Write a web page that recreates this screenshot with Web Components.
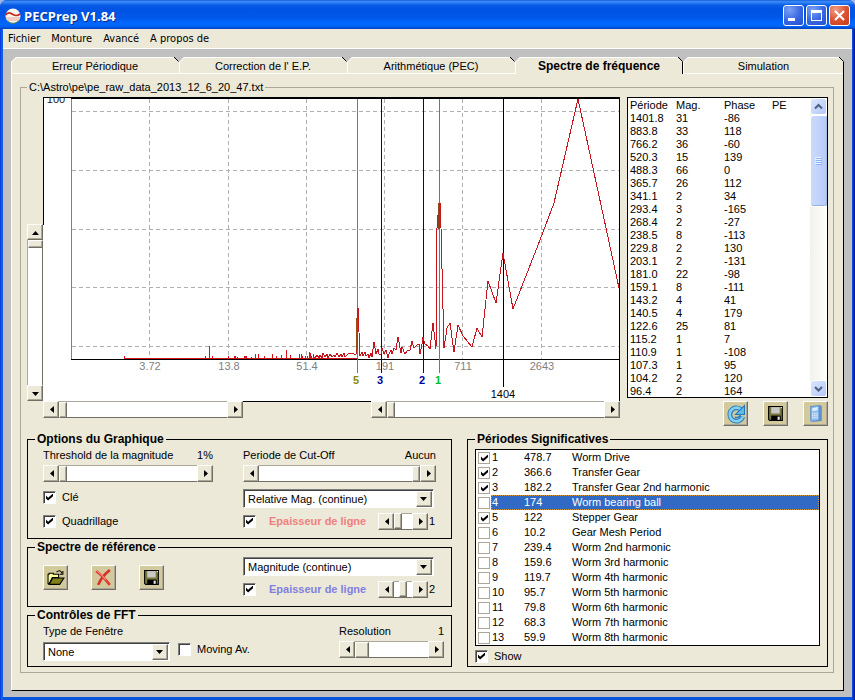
<!DOCTYPE html>
<html lang="fr">
<head>
<meta charset="utf-8">
<title>PECPrep V1.84</title>
<style>
  body { margin: 0; background: #9db4e4; font: 11px/13px "Liberation Sans", Arial, sans-serif; color: #000; }
</style>
</head>
<body>
<pec-window>
  <title-bar slot="title" caption="PECPrep V1.84"></title-bar>
  <menu-bar slot="menu" items="Fichier|Monture|Avancé|A propos de"></menu-bar>
  <tab-panel tabs="Erreur Périodique|Correction de l' E.P.|Arithmétique (PEC)|Spectre de fréquence|Simulation" selected="3">
    <spectrum-page></spectrum-page>
  </tab-panel>
</pec-window>

<script>
const face = '#ece9d8';
const raised = `background:${face};border:1px solid;border-color:#fff #716f64 #716f64 #fff;box-shadow:inset -1px -1px 0 #aca899;`;

function define(name, build, ready) {
  customElements.define(name, class extends HTMLElement {
    connectedCallback() {
      if (this.shadowRoot) return;
      const root = this.attachShadow({ mode: 'open' });
      root.innerHTML = '<style>*{box-sizing:border-box}button,input,select{font:inherit;margin:0}</style>' + build(this);
      if (ready) ready(root, this);
    }
  });
}
const attr = (el, name, fallback = '') => el.getAttribute(name) ?? fallback;

define('pec-window', () => `
<style>
  :host { display:flex; flex-direction:column; min-height:100vh; box-sizing:border-box; padding:0 3px 3px;
    border-radius:7px 7px 0 0; overflow:hidden; background:linear-gradient(90deg,#0831d9,#1666ee 2px,#0855dd 3px,#0855dd calc(100% - 3px),#0a3ad8 calc(100% - 2px),#00138c); 
    border-bottom:1px solid #001ea0; }
  slot[name=title] { display:block; margin:0 -3px; }
  main { flex:1; display:flex; flex-direction:column; padding:8px 8px 6px; background:#c0c0c0; }
</style>
<slot name="title"></slot><slot name="menu"></slot><main><slot></slot></main>`);

define('title-bar', el => `
<style>
  :host { display:flex; align-items:center; gap:2px; height:29px; box-sizing:border-box; padding:3px 5px 1px 5px;
    background:linear-gradient(#0a4ac0 0,#3c8cf8 1px,#2a7cf4 3px,#0a5ce6 5px,#0054e3 9px,#0056e8 17px,#0064fc 22px,#0068ff 25px,#005cec 27px,#0040b8 29px); }
  h1 { flex:1; margin:0 0 0 1px; font:bold 13px/18px "Open Sans","Noto Sans",sans-serif; color:#fff; text-shadow:1px 1px 0 #0a2c8c; }
  button { width:21px; height:21px; padding:0; border:1px solid #fff; border-radius:3px; background:radial-gradient(circle at 30% 20%,#7aa2f4,#3866e2 55%,#2450cc); }
  button.close { background:radial-gradient(circle at 30% 20%,#f0a088,#dc5434 50%,#c03c18); }
  svg { display:block; }
</style>
<svg width="16" height="16" viewBox="0 0 16 16"><circle cx="8" cy="8" r="7.5" fill="#f8f6ec"/><path d="M.7 7c2-3.500 5-2 7.300-.5s4.500 1.500 7.200-.5" fill="none" stroke="#c8281e" stroke-width="1.600"/><path d="M1 10h14M2 12h12" stroke="#e4a898"/><path d="M2.500 13a7.500 7.500 0 0 0 11 0" fill="none" stroke="#387848"/></svg>
<h1>${attr(el, 'caption')}</h1>
<button aria-label="Réduire"><svg width="19" height="19"><path d="M4 12h7v3H4z" fill="#fff"/></svg></button>
<button aria-label="Agrandir"><svg width="19" height="19"><path d="M4 4h11v11H4zM5 7v7h9V7z" fill="#fff" fill-rule="evenodd"/></svg></button>
<button class="close" aria-label="Fermer"><svg width="19" height="19"><path d="M5 5l9 9M14 5l-9 9" stroke="#fff" stroke-width="2"/></svg></button>`);

define('menu-bar', el => `
<style>
  :host { display:block; background:${face}; border-bottom:1px solid #fff; }
  nav { display:flex; gap:11px; height:19px; padding-left:5px; align-items:center; }
  button { border:0; padding:0; background:none; color:#000; font:11px/13px "DejaVu Sans Condensed","Noto Sans",sans-serif; }
</style>
<nav>${attr(el, 'items').split('|').map(t => `<button>${t}</button>`).join('')}</nav>`);

define('tab-panel', el => {
  const on = +attr(el, 'selected', 0);
  const tabs = attr(el, 'tabs').split('|').map((t, i, a) => `
    <button role="tab" aria-selected="${i === on}">
      <svg width="5" height="17"><path d="M0 0h5L0 5z" fill="#c0c0c0"/><path d="M.500 17V5L5 .500" fill="none" stroke="#fff"/></svg>
      <span>${t}</span>
      <svg width="5" height="17"><path d="M0 0h5v5z" fill="#c0c0c0"/><path d="M0 0L4.500 4.500${i === on || i === a.length - 1 ? 'V17' : ''}" fill="none" stroke="#000"/></svg>
    </button>`).join('');
  return `
<style>
  :host { flex:1; display:flex; flex-direction:column; }
  [role=tablist] { display:grid; grid-template-columns:168fr 168fr 168fr 168fr 161fr; }
  button { display:flex; align-items:center; height:17px; padding:0; border:0; color:#000; background:linear-gradient(#fff 1px,${face} 1px); box-shadow:inset 0 -1px #fff; }
  button[aria-selected=true] { font-weight:bold; font-size:12px; box-shadow:none; }
  span { flex:1; white-space:nowrap; line-height:17px; padding-top:1px; }
  section { flex:1; background:${face}; border:solid; border-width:0 1px 1px; border-color:#fff #000 #000 #fff; padding:7px 9px 17px 8px; }
</style>
<div role="tablist">${tabs}</div><section role="tabpanel"><slot></slot></section>`;
});

define('group-frame', el => `
<style>
  :host { display:block; }
  fieldset { height:100%; min-width:0; margin:0; padding:var(--pad,3px 15px 0); border:1px solid #000; }
  legend { padding:0 2px; line-height:13px; font-size:12px; font-weight:bold; margin-left:calc(7px - var(--inset,15px)); }
  :host([etched]) > fieldset { border-color:#aca899; }
  :host([etched]) > fieldset > legend { font-size:11px; font-weight:normal; margin:0; }
</style>
<fieldset><legend>${attr(el, 'caption')}</legend><slot></slot></fieldset>`);

define('classic-scroll', el => {
  const vert = el.hasAttribute('vertical');
  const cap = attr(el, 'caption');
  const thumb = attr(el, 'thumb', '8') + 'px';
  const arrow = a => ({ l: 'M9 3v7L5 6.500z', r: 'M5 3v7l4-3.500z', u: 'M3 9h7L6.500 5z', d: 'M3 5h7L6.500 9z' })[a];
  const btn = (a, n) => `<button aria-label="${n}"><svg width="13" height="13"><path d="${arrow(a)}"/></svg></button>`;
  return `
<style>
  :host { display:block; }
  .cap { display:flex; justify-content:space-between; margin-bottom:3px; }
  .bar { display:flex; height:17px; background:#fff; }
  button { flex:none; width:16px; height:17px; padding:0; display:grid; place-items:center; ${raised} }
  svg { display:block; }
  input { flex:1; min-width:0; height:17px; appearance:none; background:#fff; border-top:1px solid #aca899; border-bottom:1px solid #716f64; }
  input::-webkit-slider-thumb { appearance:none; width:${thumb}; height:16px; border-radius:0; ${raised} }
  :host([vertical]) .bar { flex-direction:column; height:100%; width:16px; }
  :host([vertical]) button { height:16px; }
  :host([vertical]) input { writing-mode:vertical-lr; width:16px; height:auto; min-height:0; border:0; border-left:1px solid #aca899; border-right:1px solid #716f64; }
  :host([vertical]) input::-webkit-slider-thumb { width:15px; height:${thumb}; }
</style>
${cap ? `<div class="cap"><label for="r">${cap}</label><output for="r">${attr(el, 'readout')}</output></div>` : ''}
<div class="bar">${btn(vert ? 'u' : 'l', 'Moins')}<input id="r" type="range" min="0" max="100" value="${attr(el, 'value', 0)}" ${cap ? '' : `aria-label="${attr(el, 'name')}"`}>${btn(vert ? 'd' : 'r', 'Plus')}</div>`;
});

define('classic-select', el => `
<style>
  :host { display:block; }
  label { display:block; margin-bottom:4px; }
  div { display:grid; grid-template-columns:1fr 16px; height:19px; padding:1px; background:#fff; border:1px solid; border-color:#808080 #fff #fff #808080; box-shadow:inset 1px 1px #404040; }
  select { grid-area:1/1/2/3; width:100%; height:15px; appearance:none; border:0; border-radius:0; padding:0 18px 0 3px; background:none; color:#000; line-height:15px; margin-top:1px; }
  svg { grid-area:1/2; pointer-events:none; width:16px; height:16px; ${raised} }
</style>
${attr(el, 'caption') ? `<label for="s">${attr(el, 'caption')}</label>` : ''}
<div><select id="s" aria-label="${attr(el, 'caption') || attr(el, 'name')}">${attr(el, 'options').split('|').map(o => `<option>${o}</option>`).join('')}</select><svg viewBox="0 0 14 14"><path d="M3 5h7L6.500 9z"/></svg></div>`);

const tick = `
  input { flex:none; appearance:none; display:grid; width:13px; height:13px; background:#fff; border:1px solid; border-color:#808080 #fff #fff #808080; box-shadow:inset 1px 1px #404040; }
  input:checked::before { content:""; width:7px; height:7px; margin:2px; background:#000; clip-path:polygon(0 30%,30% 60%,100% 0,100% 40%,30% 100%,0 70%); }`;

define('classic-check', el => `
<style>
  :host { display:block; }
  label { display:flex; align-items:center; gap:var(--gap,6px); height:14px; white-space:nowrap; color:var(--ink,#000); font-weight:var(--weight,normal); }
  ${tick}
</style>
<label><input type="checkbox" ${el.hasAttribute('checked') ? 'checked' : ''}><span>${attr(el, 'text')}</span></label>`);

const icons = {
  open: '<path d="M1 5h1V4h4v1h5v3H5l-3 6H1z" fill="#ffff9c" stroke="#000"/><path d="M2 14.500L5.500 8.500H16L12 14.500z" fill="#808018" stroke="#000"/><path d="M9 3c2-2 4-2 5 1m1-2v3h-3" fill="none" stroke="#000"/>',
  remove: '<path d="M1 2c5 3 9 8 13 13" fill="none" stroke="#e43c34" stroke-width="2.500"/><path d="M14 1C9 5 5 10 3 15" fill="none" stroke="#d83028" stroke-width="2.500"/><path d="M1 1c4 3 7 6 9 9" fill="none" stroke="#f49088"/>',
  save: '<path d="M1.500 1.500h13v13h-12l-1-1z" fill="#77773c" stroke="#000"/><path d="M4 2h8v6H4z" fill="#c8c8c8"/><path d="M4 10h9v5H4z" fill="#000"/><path d="M10 11h2v3h-2z" fill="#e8e8e8"/><path d="M13 2h1v1h-1z" fill="#fff"/>',
  refresh: '<path d="M13.500 4.500A6.300 6.300 0 1 0 15 11" fill="none" stroke="#2a80c0" stroke-width="4.500"/><path d="M13 4A6.400 6.400 0 1 0 15 11" fill="none" stroke="#84d0f2" stroke-width="2.500"/><path d="M16.500.5v8.500H8l3-3z" fill="#60bcea" stroke="#2478b8"/><path d="M7.500 11.500c3 1 5-.5 5-2.500" stroke="#2a80c0" stroke-width="1.500" fill="none"/>',
  calc: '<path d="M3 1l9-1 2 1v14l-9 1-2-1z" fill="#6090cc"/><path d="M4 2l7-1v13l-7 1z" fill="#8cbcec"/><path d="M5 3l5-1v3l-5 1z" fill="#e0f0ff"/><path d="M5 8h1m1 0h1m1 0h1M5 10h1m1 0h1m1 0h1M5 12h1m1 0h1m1 0h1" stroke="#f4faff" stroke-width="1.500"/>'
};
define('tool-button', el => `
<style>
  :host { display:block; }
  button { display:grid; place-items:center; width:25px; height:25px; padding:0; ${raised} background:#d2ca9c; }
  svg { display:block; overflow:visible; }
</style>
<button aria-label="${attr(el, 'name')}"><svg width="18" height="18" viewBox="0 0 17 17">${icons[attr(el, 'icon')]}</svg></button>`);

define('spectrum-chart', () => {
  const xs = [[149, '3.72'], [228, '13.8'], [306, '51.4'], [384, '191'], [462, '711'], [541, '2643']];
  const ys = [111, 170, 229, 287, 346];
  const spikes = [[124, 3], [205, 3], [209, 13], [212, 3], [228, 3], [234, 3], [235, 3], [237, 2], [244, 3], [245, 3], [246, 3], [251, 2], [255, 5], [258, 5], [264, 3], [272, 5], [276, 3], [281, 4], [286, 9], [290, 4], [299, 5], [301, 5], [302, 3], [305, 3], [307, 3], [309, 7], [310, 6], [311, 3], [313, 5]];
  const line = [[313,356],[315,358],[317,355],[319,358],[320,355],[322,358],[323,353],[325,357],[327,354],[328,358],[330,354],[332,357],[334,355],[335,357],[337,353],[339,357],[341,354],[342,357],[344,353],[345,357],[348,354],[351,353],[354,354],[356,354],[358,308],[360,356],[362,352],[363,356],[365,352],[366,356],[368,354],[369,358],[371,353],[372,357],[374,342],[376,354],[378,349],[379,354],[381,354],[382,348],[384,354],[386,350],[388,358],[389,354],[391,350],[392,354],[394,348],[396,350],[398,337],[401,353],[402,347],[405,354],[408,350],[410,350],[412,341],[414,348],[417,345],[419,344],[420,354],[422,344],[423,337],[425,344],[428,346],[430,349],[433,323],[436,349],[437,228],[439,203],[440,203],[441,228],[444,348],[447,328],[450,323],[454,352],[458,325],[463,336],[472,347],[477,328],[482,337],[488,281],[496,303],[503,253],[513,309],[540,240],[554,203],[578,99],[619,288]];
  const marks = [[357, '5', '#8a8a00'], [381, '3', '#0000a0'], [423, '2', '#0000a0'], [439, '1', '#00c020']];
  return `
<style>
  :host { display:block; }
  svg { display:block; width:100%; height:auto; background:#fff; font:11px "Liberation Sans",Arial,sans-serif; }
  path { fill:none; shape-rendering:crispEdges; }
  .grid { stroke:#b0b0b0; stroke-dasharray:4 3; }
  text { text-anchor:middle; fill:#808080; }
  .mark { font-weight:bold; }
</style>
<svg viewBox="43 97 577 304" role="img" aria-label="Spectre de fréquence">
  <path class="grid" d="${xs.map(([x]) => `M${x}.500 99V359`).join('')}${ys.map(y => `M72 ${y}.500H619`).join('')}"/>
  <path d="M71.500 99V359" stroke="#808080"/>
  <path d="M71 359.500H619" stroke="#000"/>
  ${xs.map(([x, t]) => `<text x="${x + 1}" y="370">${t}</text>`).join('')}
  <path d="M503.500 99V387" stroke="#000"/>
  ${marks.map(([x, , c]) => `<path d="M${x}.500 99V373" stroke="${c}"/>`).join('')}
  <path d="M124 358.500H358${spikes.map(([x, h]) => `M${x}.500 359V${359 - h}`).join('')}" stroke="#d8101c"/>
  <path d="M${line.map(p => p.join(' ')).join('L')}" stroke="#c8141c"/>
  <path d="M439.500 229V373" stroke="#20b030"/>
  <path d="M439 203V229" stroke="#8a4410" stroke-width="2"/>
  <path d="M357 318V350" stroke="#9a4a10" stroke-width="2"/>
  ${marks.map(([x, t, c]) => `<text class="mark" x="${x - 1}" y="384" style="fill:${c}">${t}</text>`).join('')}
  <text x="503" y="398" style="fill:#000">1404</text>
  <path d="M619.500 98V401M43.500 97V225M43 97.500H620M71 98.500H620" stroke="#000"/>
  <text x="56" y="103" style="fill:#202020">100</text>
</svg>`;
});

define('period-table', () => {
  const rows = `1401.8 31 -86|883.8 33 118|766.2 36 -60|520.3 15 139|488.3 66 0|365.7 26 112|341.1 2 34|293.4 3 -165|268.4 2 -27|238.5 8 -113|229.8 2 130|203.1 2 -131|181.0 22 -98|159.1 8 -111|143.2 4 41|140.5 4 179|122.6 25 81|115.2 1 7|110.9 1 -108|107.3 1 95|104.2 2 120|96.4 2 164`.split('|').map(r => r.split(' '));
  return `
<style>
  :host { display:flex; height:301px; box-sizing:border-box; background:#fff; border:1px solid #000; }
  table { flex:1; border-collapse:collapse; table-layout:fixed; align-self:start; margin:1px 0 -1px 2px; }
  th,td { height:13px; padding:0; line-height:13px; text-align:left; font-weight:normal; }
  .bar { flex:none; width:17px; display:flex; flex-direction:column; background:linear-gradient(90deg,#f2f1ea,#fefefc); }
  button { height:17px; padding:0; border:1px solid #fff; border-radius:3px; background:linear-gradient(135deg,#dce6fe,#b4c8f8); display:grid; place-items:center; }
  svg { display:block; }
  i { display:grid; place-items:center; height:92px; border:1px solid #fff; border-right-color:#a4b8e8; border-radius:3px; background:linear-gradient(90deg,#ccdafd,#b8cbf8); box-shadow:inset 0 -1px #98b0e8; }
  span { flex:1; }
</style>
<table><colgroup><col style="width:46px"><col style="width:48px"><col style="width:48px"><col></colgroup>
<thead><tr><th>Période</th><th>Mag.</th><th>Phase</th><th>PE</th></tr></thead>
<tbody>${rows.map(r => `<tr>${r.map(c => `<td>${c}</td>`).join('')}<td></td></tr>`).join('')}</tbody></table>
<div class="bar">
  <button aria-label="Haut"><svg width="13" height="13"><path d="M3 8.500L6.500 5 10 8.500" fill="none" stroke="#4d6185" stroke-width="2"/></svg></button>
  <i><svg width="7" height="8"><path d="M0 .500h6M0 2.500h6M0 4.500h6M0 6.500h6" stroke="#eef4fe"/><path d="M1 1.500h6M1 3.500h6M1 5.500h6M1 7.500h6" stroke="#8cb0f8"/></svg></i>
  <span></span>
  <button aria-label="Bas"><svg width="13" height="13"><path d="M3 5L6.500 8.500 10 5" fill="none" stroke="#4d6185" stroke-width="2"/></svg></button>
</div>`;
});

define('period-list', () => {
  const rows = `478.7 Worm Drive|366.6 Transfer Gear|182.2 Transfer Gear 2nd harmonic|174 Worm bearing ball|122 Stepper Gear|10.2 Gear Mesh Period|239.4 Worm 2nd harmonic|159.6 Worm 3rd harmonic|119.7 Worm 4th harmonic|95.7 Worm 5th harmonic|79.8 Worm 6th harmonic|68.3 Worm 7th harmonic|59.9 Worm 8th harmonic`.split('|').map(r => r.split(/ (.*)/));
  return `
<style>
  :host { display:block; background:#fff; border:1px solid #000; }
  ul { list-style:none; margin:0; padding:0; }
  label { display:flex; align-items:center; height:15px; padding-left:2px; }
  ${tick}
  input { border-color:#aca899; box-shadow:none; width:12px; height:12px; }
  .line { flex:1; display:grid; grid-template-columns:32px 48px 1fr; margin-left:1px; padding-left:1px; line-height:15px; white-space:nowrap; }
  .on .line { background:#316ac5; color:#fff; outline:1px dotted #ce953a; outline-offset:-1px; }
</style>
<ul>${rows.map(([p, n], i) => `<li class="${i === 3 ? 'on' : ''}"><label><input type="checkbox" ${[0, 1, 2, 4].includes(i) ? 'checked' : ''}><span class="line"><span>${i + 1}</span><span>${p}</span><span>${n}</span></span></label></li>`).join('')}</ul>`;
});

define('line-width', el => `
<style>
  :host { display:flex; align-items:center; height:18px; margin-top:4px; --ink:${attr(el, 'ink')}; --weight:bold; --gap:13px; }
  classic-check { flex:1; }
  classic-scroll { width:50px; margin-right:1px; }
  output { width:7px; }
</style>
<classic-check checked text="Epaisseur de ligne"></classic-check>
<classic-scroll name="Epaisseur de ligne" value="${attr(el, 'value')}"></classic-scroll><output>${attr(el, 'readout')}</output>`);

define('spectrum-page', () => `
<style>
  :host { display:block; }
  .main { --pad:3px 5px 5px 6px; }
  .top { display:grid; grid-template-columns:16px minmax(0,1fr) 208px; }
  .side { display:flex; flex-direction:column; justify-content:flex-end; padding-bottom:25px; }
  .side classic-scroll { height:177px; }
  .pans { display:flex; justify-content:space-between; background:linear-gradient(#000 1px,transparent 1px); }
  .pans :first-child { flex:0 1 200px; }
  .pans :last-child { flex:0 1 249px; }
  .data { margin-left:7px; }
  .acts { display:flex; justify-content:flex-end; gap:15px; margin-top:3px; }
  .low { display:grid; grid-template-columns:425fr 361fr; gap:15px; margin-top:7px; }
  .left { display:flex; flex-direction:column; gap:2px; --pad:3px 15px 0; }
  .two { display:grid; grid-template-columns:170fr 193fr; column-gap:30px; }
  .opt { height:106px; } .ref { height:66px; } .fft { height:58px; --pad:3px 7px 0 15px; }
  .checks { display:flex; flex-direction:column; gap:10px; margin-top:8px; }
  .pick { margin-top:7px; width:191px; }
  .ref .pick { margin-top:0; }
  .files { display:flex; gap:23px; margin-top:8px; }
  .win { display:grid; grid-template-columns:127px 1fr 105px; column-gap:8px; }
  .win classic-check { margin-top:17px; }
  .sig { --pad:3px 7px 0; --inset:7px; }
  .show { margin-top:3px; }
</style>
<group-frame class="main" etched caption="C:\\Astro\\pe\\pe_raw_data_2013_12_6_20_47.txt">
  <div class="top">
    <div class="side"><classic-scroll vertical name="Echelle"></classic-scroll></div>
    <div><spectrum-chart></spectrum-chart>
      <div class="pans"><classic-scroll name="Zoom"></classic-scroll><classic-scroll name="Position"></classic-scroll></div></div>
    <div class="data"><period-table></period-table>
      <div class="acts"><tool-button icon="refresh" name="Actualiser"></tool-button><tool-button icon="save" name="Enregistrer"></tool-button><tool-button icon="calc" name="Calculer"></tool-button></div></div>
  </div>
  <div class="low">
    <div class="left">
      <group-frame class="opt" caption="Options du Graphique"><div class="two">
        <div><classic-scroll caption="Threshold de la magnitude" readout="1%"></classic-scroll>
          <div class="checks"><classic-check checked text="Clé"></classic-check><classic-check checked text="Quadrillage"></classic-check></div></div>
        <div><classic-scroll caption="Periode de Cut-Off" readout="Aucun" value="100"></classic-scroll>
          <classic-select class="pick" name="Tracé" options="Relative Mag. (continue)"></classic-select>
          <line-width ink="#f08080" value="0" readout="1"></line-width></div>
      </div></group-frame>
      <group-frame class="ref" caption="Spectre de référence"><div class="two">
        <div class="files"><tool-button icon="open" name="Ouvrir"></tool-button><tool-button icon="remove" name="Supprimer"></tool-button><tool-button icon="save" name="Enregistrer"></tool-button></div>
        <div><classic-select class="pick" name="Tracé de référence" options="Magnitude (continue)"></classic-select>
          <line-width ink="#8080e0" value="50" readout="2"></line-width></div>
      </div></group-frame>
      <group-frame class="fft" caption="Contrôles de FFT"><div class="win">
        <classic-select caption="Type de Fenêtre" options="None"></classic-select>
        <classic-check text="Moving Av."></classic-check>
        <classic-scroll caption="Resolution" readout="1" thumb="14"></classic-scroll>
      </div></group-frame>
    </div>
    <group-frame class="sig" caption="Périodes Significatives"><period-list></period-list>
      <classic-check class="show" checked text="Show"></classic-check></group-frame>
  </div>
</group-frame>`);
</script>
</body>
</html>
